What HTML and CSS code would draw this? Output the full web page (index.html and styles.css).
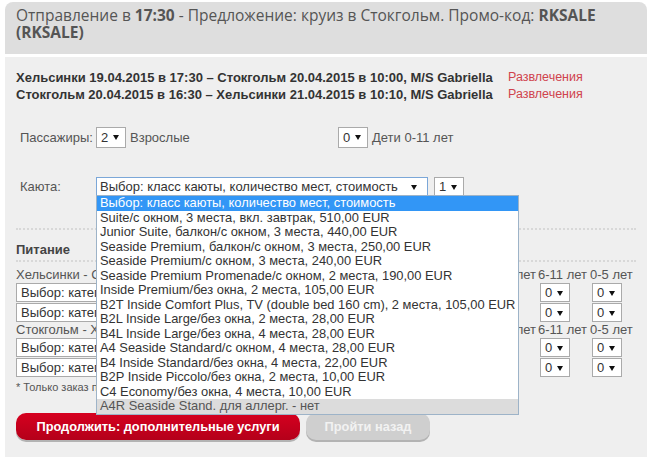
FILE: index.html
```html
<!DOCTYPE html>
<html lang="ru">

<head>
    <meta charset="UTF-8">
    <title>Бронирование круиза</title>
    <link rel="stylesheet" href="styles.css">
</head>

<body>
    <div class="wrap">
        <!-- заголовок -->
        <div class="head">
            Отправление в <b>17:30</b> - Предложение: круиз в Стокгольм. Промо-код: <b>RKSALE (RKSALE)</b>
        </div>

        <div class="panel">
            <!-- маршрут -->
            <div class="route">
                <b>Хельсинки 19.04.2015 в 17:30 – Стокгольм 20.04.2015 в 10:00, M/S Gabriella</b>
                <a href="#" class="fun">Развлечения</a>
                <b>Стокгольм 20.04.2015 в 16:30 – Хельсинки 21.04.2015 в 10:10, M/S Gabriella</b>
                <a href="#" class="fun">Развлечения</a>
            </div>

            <!-- пассажиры -->
            <div class="pax">
                <span class="lbl">Пассажиры:</span>
                <span class="grp"><span class="sel s-small">2</span> Взрослые</span>
                <span class="grp"><span class="sel s-small">0</span> Дети 0-11 лет</span>
            </div>

            <!-- каюта -->
            <div class="cabin">
                <span class="lbl">Каюта:</span>
                <div class="cabin-box">
                    <span class="sel s-cabin">Выбор: класс каюты, количество мест, стоимость</span>
                    <ul class="dropdown">
                        <li class="on">Выбор: класс каюты, количество мест, стоимость</li>
                        <li>Suite/с окном, 3 места, вкл. завтрак, 510,00 EUR</li>
                        <li>Junior Suite, балкон/с окном, 3 места, 440,00 EUR</li>
                        <li>Seaside Premium, балкон/с окном, 3 места, 250,00 EUR</li>
                        <li>Seaside Premium/с окном, 3 места, 240,00 EUR</li>
                        <li>Seaside Premium Promenade/с окном, 2 места, 190,00 EUR</li>
                        <li>Inside Premium/без окна, 2 места, 105,00 EUR</li>
                        <li>B2T Inside Comfort Plus, TV (double bed 160 cm), 2 места, 105,00 EUR</li>
                        <li>B2L Inside Large/без окна, 2 места, 28,00 EUR</li>
                        <li>B4L Inside Large/без окна, 4 места, 28,00 EUR</li>
                        <li>A4 Seaside Standard/с окном, 4 места, 28,00 EUR</li>
                        <li>B4 Inside Standard/без окна, 4 места, 22,00 EUR</li>
                        <li>B2P Inside Piccolo/без окна, 2 места, 10,00 EUR</li>
                        <li>C4 Economy/без окна, 4 места, 10,00 EUR</li>
                        <li class="off">A4R Seaside Stand. для аллерг. - нет</li>
                    </ul>
                </div>
                <span class="sel s-small">1</span>
            </div>

            <!-- питание -->
            <div class="meals">
                <div class="meals-title">Питание</div>
                <div class="mgrid">
                    <span class="mh-left">Хельсинки - Стокгольм<span class="right-lbl">Взрослые 12+ лет</span></span>
                    <span class="mh">6-11 лет</span>
                    <span class="mh">0-5 лет</span>

                    <span class="sel s-meal">Выбор: категория питания</span>
                    <span class="sel s-small">0</span>
                    <span class="sel s-small">0</span>

                    <span class="sel s-meal">Выбор: категория питания</span>
                    <span class="sel s-small">0</span>
                    <span class="sel s-small">0</span>

                    <span class="mh-left">Стокгольм - Хельсинки<span class="right-lbl">Взрослые 12+ лет</span></span>
                    <span class="mh">6-11 лет</span>
                    <span class="mh">0-5 лет</span>

                    <span class="sel s-meal">Выбор: категория питания</span>
                    <span class="sel s-small">0</span>
                    <span class="sel s-small">0</span>

                    <span class="sel s-meal">Выбор: категория питания</span>
                    <span class="sel s-small">0</span>
                    <span class="sel s-small">0</span>
                </div>
                <div class="note">* Только заказ питания заранее</div>
            </div>

            <!-- кнопки -->
            <div class="btns">
                <a href="#" class="btn btn-red">Продолжить: дополнительные услуги</a>
                <a href="#" class="btn btn-gray">Пройти назад</a>
            </div>
        </div>
    </div>
</body>

</html>
```

FILE: styles.css
```css
body {
    margin: 0;
    background: #fff;
    font-family: "Liberation Sans", Arial, sans-serif;
    color: #555;
}

.wrap {
    padding: 2px 3px 0 5px;
}

.head {
    background: #dedede;
    border-radius: 8px 8px 0 0;
    padding: 5px 11px 0;
    height: 47px;
    font-family: "Open Sans", "Liberation Sans", sans-serif;
    font-size: 15.5px;
    line-height: 17px;
    color: #555;
}

.panel {
    margin-top: 3px;
    background: #efefef;
    padding: 12px 11px 18px;
    font-size: 13px;
}

/* маршрут */
.route {
    display: grid;
    grid-template-columns: 492px auto;
    font-size: 13px;
    line-height: 17px;
    color: #333;
}

.route .fun {
    color: #d0434d;
    text-decoration: none;
    font-size: 12.5px;
}

.lbl {
    width: 76px;
    flex: none;
}

/* фейковые селекты */
.sel {
    display: inline-flex;
    align-items: center;
    position: relative;
    box-sizing: border-box;
    height: 19px;
    background: #fff;
    border: 1px solid #aaa;
    padding: 0 14px 0 4px;
    color: #333;
    white-space: nowrap;
    overflow: hidden;
    font-size: 13px;
}

.sel::after {
    content: "";
    position: absolute;
    right: 6px;
    top: 7px;
    border-left: 3px solid transparent;
    border-right: 3px solid transparent;
    border-top: 5px solid #111;
}

.s-small {
    width: 30px;
}

.pax {
    display: flex;
    align-items: center;
    margin: 24px 0 0 4px;
    height: 21px;
}

.pax .sel {
    height: 21px;
}

.pax .grp {
    width: 242px;
    display: flex;
    align-items: center;
    gap: 4px;
}

.cabin {
    display: flex;
    align-items: center;
    gap: 6px;
    margin: 29px 0 0 4px;
}

.cabin .lbl {
    width: 70px;
}

.cabin-box {
    position: relative;
}

.s-cabin {
    width: 332px;
    border-color: #7ba7d8;
    padding-left: 3px;
}

.s-cabin::after {
    right: 10px;
}

/* открытый список */
.dropdown {
    position: absolute;
    top: 18px;
    left: 0;
    width: 421px;
    margin: 0;
    padding: 0;
    list-style: none;
    background: #fff;
    border: 1px solid #9db3c8;
    z-index: 5;
    font-size: 12.9px;
}

.dropdown li {
    height: 14.5px;
    line-height: 14.5px;
    padding-left: 3px;
    color: #333;
    white-space: nowrap;
}

.dropdown li.on {
    background: #3296f6;
    color: #fff;
}

.dropdown li.off {
    background: #dcdcdc;
    color: #555;
}

/* питание */
.meals {
    margin-top: 32px;
    border-top: 2px dotted #d8d8d8;
}

.meals-title {
    font-weight: bold;
    color: #444;
    padding: 12px 0 3px;
    border-bottom: 2px dotted #d8d8d8;
    line-height: 15px;
}

.mgrid {
    display: grid;
    grid-template-columns: 524px 52px 52px;
    row-gap: 1px;
    margin-top: 6px;
    align-items: center;
}

.mh-left {
    display: flex;
    justify-content: space-between;
    padding-right: 4px;
    line-height: 14px;
}

.mh {
    margin-left: -2px;
    line-height: 14px;
}

.s-meal {
    width: 420px;
}

.mgrid .sel {
    height: 19px;
}

.note {
    font-size: 11px;
    margin-top: 4px;
    line-height: 13px;
}

/* кнопки */
.btns {
    display: flex;
    gap: 6px;
    margin-top: 19px;
}

.btn {
    display: flex;
    align-items: center;
    justify-content: center;
    height: 27px;
    border-radius: 10px;
    font-weight: bold;
    font-size: 12.8px;
    text-decoration: none;
    box-shadow: 0 2px 0 rgba(0, 0, 0, .25);
}

.btn-red {
    width: 284px;
    background: linear-gradient(#d6001f, #b4001a);
    color: #fff;
}

.btn-gray {
    width: 124px;
    background: #cfcfcf;
    color: #f2f2f2;
}
```
